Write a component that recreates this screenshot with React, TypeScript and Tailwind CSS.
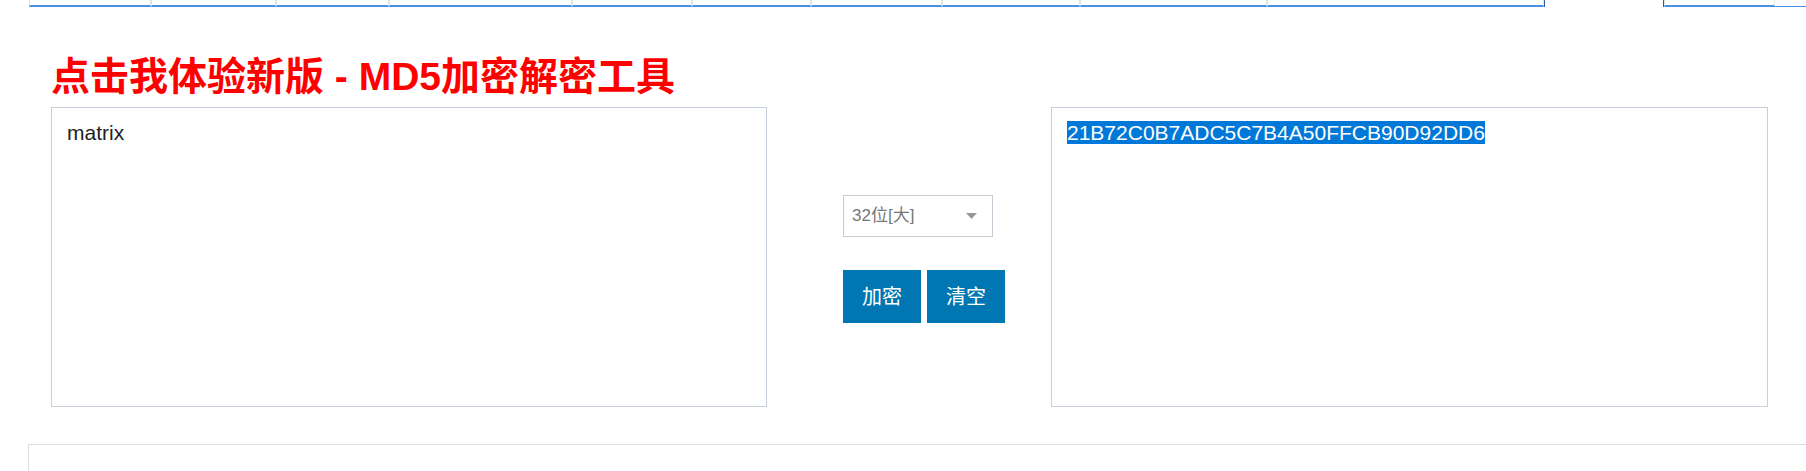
import React from 'react';

const tabs = [122, 125, 113, 183, 120, 119, 131, 138, 187, 277];

const App = () => {
    return (
        <div className="w-[1806px] h-[471px] bg-white overflow-hidden font-['Liberation_Sans','Noto_Sans_CJK_SC',sans-serif]">
            {/* top nav (cut off) */}
            <div className="flex h-[7px]">
                <div className="w-[29px] shrink-0" />
                {tabs.map((w, i) => (
                    <div
                        key={i}
                        style={{ width: w }}
                        className="shrink-0 h-[7px] border-x border-[#e3e3e3] border-b-2 border-b-[#4a90e2]"
                    />
                ))}
                <div className="w-px h-[7px] bg-[#1f5fa3] shrink-0" />
                <div className="w-[118px] shrink-0" />
                <div className="w-px h-[7px] bg-[#1f5fa3] shrink-0" />
                <div className="w-[111px] shrink-0 h-[7px] border-x border-[#e3e3e3] border-b-2 border-b-[#4a90e2]" />
                <div className="flex-1 h-[7px] border-b border-b-[#4a90e2]" />
            </div>

            {/* title */}
            <div className="pl-[51px] pt-[50px] h-[100px]">
                <h1 className="text-[39px] leading-[39px] font-bold text-[#ff0000] font-['Liberation_Sans','Noto_Sans_CJK_SC',sans-serif]">
                    点击我体验新版 - MD5加密解密工具
                </h1>
            </div>

            {/* main */}
            <div className="flex pl-[51px]">
                <div className="w-[716px] h-[300px] border border-[#c6d0dc] px-[15px] pt-[13px] text-[21px] leading-[24px] text-[#222]">
                    matrix
                </div>

                <div className="w-[284px] pl-[76px] pt-[88px]">
                    <div className="w-[150px] h-[42px] border border-[#c6ccd6] flex items-center justify-between pl-[8px] pr-[15px]">
                        <span className="text-[17px] text-[#777]">32位[大]</span>
                        <svg width="11" height="6" viewBox="0 0 11 6">
                            <path d="M0 0 L11 0 L5.5 6 Z" fill="#999" />
                        </svg>
                    </div>
                    <div className="flex gap-[6px] mt-[33px]">
                        <button className="w-[78px] h-[53px] bg-[#0077b3] text-white text-[20px]">加密</button>
                        <button className="w-[78px] h-[53px] bg-[#0077b3] text-white text-[20px]">清空</button>
                    </div>
                </div>

                <div className="w-[717px] h-[300px] border border-[#c6d0dc] px-[15px] pt-[13px] text-[21px] leading-[24px]">
                    <span className="bg-[#0078d7] text-white">21B72C0B7ADC5C7B4A50FFCB90D92DD6</span>
                </div>
            </div>

            {/* bottom panel */}
            <div className="ml-[28px] mt-[37px] h-[40px] border-l border-t border-[#dddddd]" />
        </div>
    );
};

export default App;
